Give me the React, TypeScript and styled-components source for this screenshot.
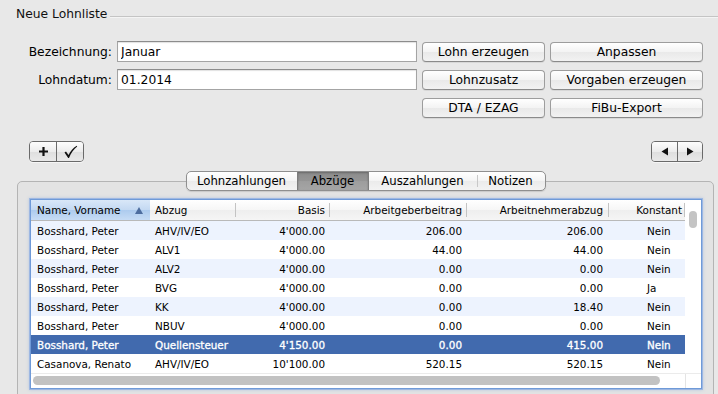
import React from 'react';
import styled, { createGlobalStyle } from 'styled-components';

const GlobalStyle = createGlobalStyle`
  html, body {
    margin: 0;
    padding: 0;
    background: #e8e8e8;
  }
  body {
    font-family: 'DejaVu Sans', 'Lucida Grande', sans-serif;
    color: #000;
  }
`

const Window = styled.div`
  width: 718px;
  height: 394px;
  overflow: hidden;
  box-sizing: border-box;
  padding-top: 7px;
  background: #e8e8e8;
  display: flex;
  flex-direction: column;
`

const TitleRow = styled.div`
  display: flex;
  align-items: center;
  gap: 3px;
  height: 16px;
  padding-left: 16px;
`

const Title = styled.span`
  font-size: 12.3px;
  color: #111;
  white-space: nowrap;
`

const TitleRule = styled.div`
  flex: 1;
  margin-top: 6px;
  border-top: 1px solid #c4c4c4;
  border-bottom: 1px solid #f4f4f4;
`

const Form = styled.div`
  display: grid;
  grid-template-columns: 96px 300px 123px 153px;
  grid-auto-rows: 21px;
  column-gap: 5px;
  row-gap: 7px;
  align-items: center;
  margin-top: 20px;
  padding-left: 16px;
`

const Label = styled.label`
  font-size: 12.3px;
  text-align: right;
  white-space: nowrap;
`

const Input = styled.input`
  height: 21px;
  box-sizing: border-box;
  margin: 0;
  padding: 0 3px;
  border: 1px solid #a4a4a4;
  border-top-color: #8c8c8c;
  box-shadow: inset 0 1px 1px rgba(0, 0, 0, 0.12);
  background: #fff;
  font-family: inherit;
  font-size: 12.3px;
  color: #000;
  outline: none;
`

const PushButton = styled.button<{ $col?: number }>`
  grid-column: ${p => (p.$col ? p.$col : 'auto')};
  height: 20px;
  box-sizing: border-box;
  margin: 0;
  padding: 0;
  border: 1px solid #9d9d9d;
  border-bottom-color: #8a8a8a;
  border-radius: 4px;
  background: linear-gradient(#ffffff, #f3f3f3 50%, #e9e9e9 51%, #f2f2f2);
  box-shadow: 0 1px 0 rgba(0, 0, 0, 0.07);
  font-family: inherit;
  font-size: 12.3px;
  color: #000;
  white-space: nowrap;
`

const Toolbar = styled.div`
  display: flex;
  justify-content: space-between;
  margin-top: 23px;
  padding: 0 15px 0 29px;
`

const Segmented = styled.div`
  display: flex;
  height: 21px;
  box-sizing: border-box;
  border: 1px solid #6a6a6a;
  border-radius: 4px;
  overflow: hidden;
  box-shadow: 0 1px 0 rgba(255, 255, 255, 0.6);
`

const Segment = styled.div<{ $w: number; $divider?: boolean }>`
  width: ${p => p.$w}px;
  display: flex;
  align-items: center;
  justify-content: center;
  background: linear-gradient(#fdfdfd, #ececec 50%, #dedede 51%, #e9e9e9);
  border-left: ${p => (p.$divider ? '1px solid #6a6a6a' : 'none')};
`

const TabView = styled.div`
  display: flex;
  flex-direction: column;
  margin: 9px 4px 0 17px;
`

const TabStrip = styled.div`
  align-self: center;
  display: flex;
  height: 20px;
  box-sizing: border-box;
  margin-bottom: -10px;
  position: relative;
  z-index: 1;
  border: 1px solid #8f8f8f;
  border-radius: 5px;
  overflow: hidden;
  background: linear-gradient(#ffffff, #f4f4f4 50%, #ebebeb 51%, #f3f3f3);
  box-shadow: 0 1px 1px rgba(0, 0, 0, 0.12);
`

const Tab = styled.div<{ $w: number; $active?: boolean; $divider?: boolean }>`
  width: ${p => p.$w}px;
  display: flex;
  align-items: center;
  justify-content: center;
  font-size: 11.7px;
  color: #000;
  position: relative;
  background: ${p =>
    p.$active
      ? 'linear-gradient(#8b8b8b, #959595 50%, #9d9d9d 51%, #a5a5a5)'
      : 'transparent'};
  box-shadow: ${p => (p.$active ? 'inset 0 1px 2px rgba(0,0,0,0.25)' : 'none')};
  border-left: ${p => (p.$active ? '1px solid #7d7d7d' : 'none')};
  border-right: ${p => (p.$active ? '1px solid #7d7d7d' : 'none')};

  &::before {
    content: '';
    display: ${p => (p.$divider ? 'block' : 'none')};
    position: absolute;
    left: 0;
    top: 3px;
    bottom: 3px;
    width: 1px;
    background: #c8c8c8;
  }
`

const TabBox = styled.div`
  border: 1px solid #b4b4b4;
  border-radius: 5px;
  background: #e3e3e3;
  padding: 17px 11px 20px 12px;
`

const TableFrame = styled.div`
  display: flex;
  flex-direction: column;
  background: #fff;
  border: 1px solid #6f9ad8;
  box-shadow: 0 0 0 1px rgba(120, 160, 225, 0.55), 0 0 3px 1px rgba(120, 160, 225, 0.4);
`

const TableBody = styled.div`
  display: flex;
`

const Grid = styled.div`
  width: 654px;
`

const cols = '119px 86px 94px 137px 142px 76px'

const HeaderRow = styled.div`
  display: grid;
  grid-template-columns: ${cols};
  height: 20px;
  border-bottom: 1px solid #b9b9b9;
  background: linear-gradient(#ffffff, #f6f6f6 50%, #eeeeee 51%, #f5f5f5);
`

const HeaderCell = styled.div<{ $align: string; $pl: number; $pr: number; $sorted?: boolean; $sep?: boolean }>`
  position: relative;
  display: flex;
  align-items: center;
  justify-content: ${p => (p.$sorted ? 'space-between' : p.$align === 'right' ? 'flex-end' : 'flex-start')};
  padding: 0 ${p => p.$pr}px 0 ${p => p.$pl}px;
  font-size: 10.4px;
  white-space: nowrap;
  background: ${p =>
    p.$sorted
      ? 'linear-gradient(#d9e7f8, #c3d8f2 50%, #adcbee 51%, #c6dcf5)'
      : 'transparent'};

  &::after {
    content: '';
    display: ${p => (p.$sep ? 'block' : 'none')};
    position: absolute;
    right: 0;
    top: 3px;
    bottom: 3px;
    width: 1px;
    background: #c3c3c3;
  }
`

const Row = styled.div<{ $alt?: boolean; $selected?: boolean }>`
  display: grid;
  grid-template-columns: ${cols};
  height: 19px;
  background: ${p => (p.$selected ? '#416aae' : p.$alt ? '#edf3fe' : '#fff')};
  color: ${p => (p.$selected ? '#fff' : '#000')};
  -webkit-text-stroke: ${p => (p.$selected ? '0.3px #fff' : '0')};
`

const Cell = styled.div<{ $align: string; $pl: number; $pr: number }>`
  display: flex;
  align-items: center;
  justify-content: ${p => (p.$align === 'right' ? 'flex-end' : 'flex-start')};
  padding: 0 ${p => p.$pr}px 0 ${p => p.$pl}px;
  font-size: 10.4px;
  white-space: nowrap;
  overflow: hidden;
`

const VScroll = styled.div`
  width: 16px;
  background: #fff;
`

const VThumb = styled.div`
  margin: 11px 4px 0 4px;
  height: 17px;
  border-radius: 4px;
  background: #c4c4c4;
`

const HScroll = styled.div`
  display: flex;
  height: 15px;
  box-sizing: border-box;
  border-top: 1px solid #ebebeb;
`

const HTrack = styled.div`
  width: 654px;
`

const HThumb = styled.div`
  margin: 2px 25px 0 2px;
  height: 9px;
  border-radius: 5px;
  background: #c2c2c2;
`

const Corner = styled.div`
  flex: 1;
  border-left: 1px solid #e4e4e4;
`

type Col = { key: string; title: string; align: string; pl: number; pr: number; hAlign: string; hpl: number; hpr: number }

const columns: Col[] = [
  { key: 'name', title: 'Name, Vorname', align: 'left', pl: 6, pr: 0, hAlign: 'left', hpl: 6, hpr: 7 },
  { key: 'abzug', title: 'Abzug', align: 'left', pl: 5, pr: 0, hAlign: 'left', hpl: 5, hpr: 0 },
  { key: 'basis', title: 'Basis', align: 'right', pl: 0, pr: 5, hAlign: 'right', hpl: 0, hpr: 5 },
  { key: 'ag', title: 'Arbeitgeberbeitrag', align: 'right', pl: 0, pr: 5, hAlign: 'right', hpl: 0, hpr: 5 },
  { key: 'an', title: 'Arbeitnehmerabzug', align: 'right', pl: 0, pr: 6, hAlign: 'right', hpl: 0, hpr: 6 },
  { key: 'konst', title: 'Konstant', align: 'left', pl: 38, pr: 0, hAlign: 'right', hpl: 0, hpr: 3 },
]

const rows = [
  ['Bosshard, Peter', 'AHV/IV/EO', "4'000.00", '206.00', '206.00', 'Nein'],
  ['Bosshard, Peter', 'ALV1', "4'000.00", '44.00', '44.00', 'Nein'],
  ['Bosshard, Peter', 'ALV2', "4'000.00", '0.00', '0.00', 'Nein'],
  ['Bosshard, Peter', 'BVG', "4'000.00", '0.00', '0.00', 'Ja'],
  ['Bosshard, Peter', 'KK', "4'000.00", '0.00', '18.40', 'Nein'],
  ['Bosshard, Peter', 'NBUV', "4'000.00", '0.00', '0.00', 'Nein'],
  ['Bosshard, Peter', 'Quellensteuer', "4'150.00", '0.00', '415.00', 'Nein'],
  ['Casanova, Renato', 'AHV/IV/EO', "10'100.00", '520.15', '520.15', 'Nein'],
]

const selectedRow = 6

const tabs = [
  { label: 'Lohnzahlungen', w: 110 },
  { label: 'Abzüge', w: 70 },
  { label: 'Auszahlungen', w: 108 },
  { label: 'Notizen', w: 68 },
]

const activeTab = 1

const App: React.FC = () => {
  return (
    <Window>
      <GlobalStyle />
      <TitleRow>
        <Title>Neue Lohnliste</Title>
        <TitleRule />
      </TitleRow>

      <Form>
        <Label>Bezeichnung:</Label>
        <Input defaultValue='Januar' />
        <PushButton>Lohn erzeugen</PushButton>
        <PushButton>Anpassen</PushButton>
        <Label>Lohndatum:</Label>
        <Input defaultValue='01.2014' />
        <PushButton>Lohnzusatz</PushButton>
        <PushButton>Vorgaben erzeugen</PushButton>
        <PushButton $col={3}>DTA / EZAG</PushButton>
        <PushButton>FiBu-Export</PushButton>
      </Form>

      <Toolbar>
        <Segmented>
          <Segment $w={26}>
            <svg width='11' height='11' viewBox='0 0 11 11'>
              <path d='M5.5 1v9M1 5.5h9' stroke='#111' strokeWidth='2.2' />
            </svg>
          </Segment>
          <Segment $w={26} $divider>
            <svg width='15' height='14' viewBox='0 0 15 14'>
              <path d='M1.5 7.5 L3 6.5 L5.5 10 C7.5 6 10 3 13.8 0.8 L14.2 1.4 C10.8 4 8.2 7.5 6 13 L5.2 13 Z' fill='#111' />
            </svg>
          </Segment>
        </Segmented>
        <Segmented>
          <Segment $w={25}>
            <svg width='8' height='9' viewBox='0 0 8 9'>
              <path d='M7 0.5v8L0.5 4.5z' fill='#111' />
            </svg>
          </Segment>
          <Segment $w={24} $divider>
            <svg width='8' height='9' viewBox='0 0 8 9'>
              <path d='M1 0.5v8L7.5 4.5z' fill='#111' />
            </svg>
          </Segment>
        </Segmented>
      </Toolbar>

      <TabView>
        <TabStrip>
          {tabs.map((t, i) => (
            <Tab
              key={t.label}
              $w={t.w}
              $active={i === activeTab}
              $divider={i > 0 && i !== activeTab && i - 1 !== activeTab}
            >
              {t.label}
            </Tab>
          ))}
        </TabStrip>
        <TabBox>
          <TableFrame>
            <TableBody>
              <Grid>
                <HeaderRow>
                  {columns.map((c, i) => (
                    <HeaderCell
                      key={c.key}
                      $align={c.hAlign}
                      $pl={c.hpl}
                      $pr={c.hpr}
                      $sorted={i === 0}
                      $sep={i > 0}
                    >
                      <span>{c.title}</span>
                      {i === 0 && (
                        <svg width='8' height='7' viewBox='0 0 8 7'>
                          <path d='M4 0L8 7H0z' fill='#4d6d9f' />
                        </svg>
                      )}
                    </HeaderCell>
                  ))}
                </HeaderRow>
                {rows.map((r, ri) => (
                  <Row key={ri} $alt={ri % 2 === 0} $selected={ri === selectedRow}>
                    {r.map((v, ci) => (
                      <Cell key={ci} $align={columns[ci].align} $pl={columns[ci].pl} $pr={columns[ci].pr}>
                        {v}
                      </Cell>
                    ))}
                  </Row>
                ))}
              </Grid>
              <VScroll>
                <VThumb />
              </VScroll>
            </TableBody>
            <HScroll>
              <HTrack>
                <HThumb />
              </HTrack>
              <Corner />
            </HScroll>
          </TableFrame>
        </TabBox>
      </TabView>
    </Window>
  )
}

export default App;
